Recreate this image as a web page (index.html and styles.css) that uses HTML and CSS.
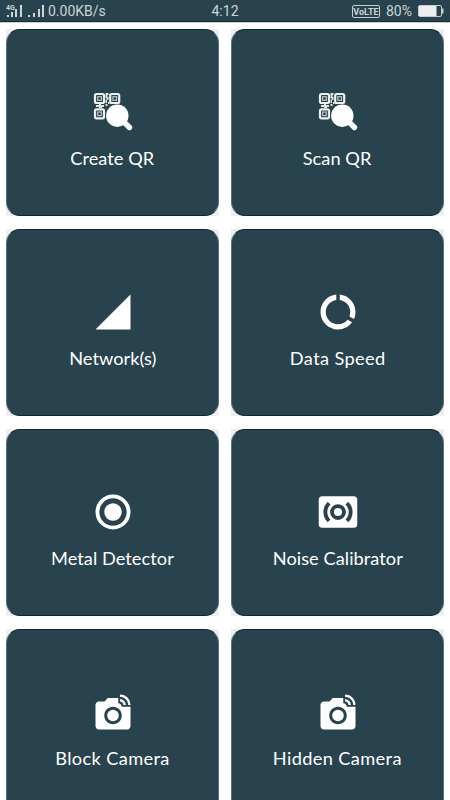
FILE: index.html
```
<!DOCTYPE html>
<html lang="en">

<head>
    <meta charset="UTF-8">
    <meta name="viewport" content="width=device-width, initial-scale=1.0">
    <title>Tools</title>
    <link rel="stylesheet" href="styles.css">
</head>

<body>
    <!-- shared icons -->
    <svg class="defs" width="0" height="0">
        <symbol id="qr" viewBox="0 0 42 42">
            <g fill="none" stroke="#eef0f0" stroke-width="2.2">
                <rect x="3" y="3" width="9" height="9" rx="1.6" />
                <rect x="18.2" y="3" width="9" height="9" rx="1.6" />
                <rect x="3" y="18.300" width="9" height="9" rx="1.6" />
            </g>
            <g fill="none" stroke="#bcc5c9" stroke-width="1.200">
                <rect x="5.700" y="5.700" width="3.600" height="3.600" />
                <rect x="20.900" y="5.700" width="3.600" height="3.600" />
                <rect x="5.700" y="21" width="3.600" height="3.600" />
            </g>
            <path fill="#e0e4e5" d="M13.500 2h3v2h-1v2h1v3h-1.500v3H13.500V9h1V7h-1zM4 14h3v-1h2v1h3v2h-2V17H7v-1H4zM13.500 13h2v2h-2zM16 11h1.500v2H16z" />
            <circle cx="25.300" cy="24.700" r="11.200" />
            <path d="M32 31l5.500 5.500" stroke="#fff" stroke-width="5.400" stroke-linecap="round" />
        </symbol>
        <symbol id="camera" viewBox="0 0 24 24">
            <circle cx="12" cy="14" r="3.300" />
            <path d="M16 3.330c2.580 0 4.670 2.090 4.670 4.670H22c0-3.310-2.690-6-6-6v1.330M16 6c1.110 0 2 .890 2 2h1.330c0-1.840-1.490-3.330-3.330-3.330V6" />
            <path d="M17 9c0-1.110-.890-2-2-2V4H9L7.170 6H4c-1.100 0-2 .900-2 2v12c0 1.100.900 2 2 2h16c1.100 0 2-.900 2-2V9h-5zm-5 10c-2.760 0-5-2.240-5-5s2.240-5 5-5 5 2.240 5 5-2.240 5-5 5z" />
        </symbol>
    </svg>

    <header class="status-bar">
        <div class="status-left">
            <svg class="signals" width="39" height="14" viewBox="0 0 39 14">
                <text class="net-type" x="0" y="6">4G</text>
                <path d="M1 11h2v2H1zM5 8h2v5H5zM9 5h2v8H9zM14 1h2v12h-2zM22 11h2v2h-2zM27 9h2v4h-2zM32 5h2v8h-2zM36 1h2v12h-2z" />
            </svg>
            <span class="rate">0.00KB/s</span>
        </div>
        <span class="clock">4:12</span>
        <div class="status-right">
            <span class="volte">VoLTE</span>
            <span class="percent">80%</span>
            <svg class="battery" width="26" height="12" viewBox="0 0 26 12">
                <rect x=".5" y=".5" width="23" height="11" rx="1.500" fill="none" stroke="#c6cdd0" />
                <rect x="1" y="1" width="17.500" height="10" fill="#eceeef" />
                <rect x="24" y="3.500" width="1.500" height="5" fill="#c6cdd0" />
            </svg>
        </div>
    </header>

    <main class="grid">
        <div class="tile">
            <div class="card">
                <svg class="icon"><use href="#qr" /></svg>
                <span class="label">Create QR</span>
            </div>
        </div>
        <div class="tile">
            <div class="card">
                <svg class="icon"><use href="#qr" /></svg>
                <span class="label">Scan QR</span>
            </div>
        </div>
        <div class="tile">
            <div class="card">
                <svg class="icon" viewBox="0 0 24 24"><path d="M2 22h20V2z" /></svg>
                <span class="label">Network(s)</span>
            </div>
        </div>
        <div class="tile">
            <div class="card">
                <svg class="icon" viewBox="0 0 24 24"><path d="M13 2.050v3.030c3.390.490 6 3.390 6 6.920 0 .900-.180 1.750-.480 2.540l2.600 1.530c.560-1.240.880-2.620.880-4.070 0-5.180-3.950-9.450-9-9.950zM12 19c-3.870 0-7-3.130-7-7 0-3.530 2.610-6.430 6-6.920V2.050c-5.060.500-9 4.760-9 9.950 0 5.520 4.470 10 9.990 10 3.310 0 6.240-1.610 8.060-4.090l-2.600-1.530C16.170 17.980 14.210 19 12 19z" /></svg>
                <span class="label wide">Data Speed</span>
            </div>
        </div>
        <div class="tile">
            <div class="card">
                <svg class="icon" viewBox="0 0 24 24">
                    <circle cx="12" cy="12" r="8.900" fill="none" stroke="#fff" stroke-width="2.200" />
                    <circle cx="12" cy="12" r="5" />
                </svg>
                <span class="label">Metal Detector</span>
            </div>
        </div>
        <div class="tile">
            <div class="card">
                <svg class="icon" viewBox="0 0 24 24">
                    <rect x="1" y="3" width="22" height="18" rx="2" />
                    <g class="cut">
                        <circle cx="12" cy="12" r="3.400" />
                        <path d="M6.900 6.900a7.200 7.200 0 0 0 0 10.200M17.100 6.900a7.200 7.200 0 0 1 0 10.200" />
                    </g>
                </svg>
                <span class="label">Noise Calibrator</span>
            </div>
        </div>
        <div class="tile">
            <div class="card">
                <svg class="icon"><use href="#camera" /></svg>
                <span class="label wide">Block Camera</span>
            </div>
        </div>
        <div class="tile">
            <div class="card">
                <svg class="icon"><use href="#camera" /></svg>
                <span class="label wide">Hidden Camera</span>
            </div>
        </div>
    </main>
</body>

</html>
```
FILE: styles.css
```
* {
    box-sizing: border-box;
}

body {
    margin: 0;
    height: 800px;
    overflow: hidden;
    background: #fff;
    font-family: "Lato", sans-serif;
    color: #fff;
}

.defs {
    display: block;
}

.status-bar {
    display: grid;
    grid-template-columns: 1fr auto 1fr;
    align-items: center;
    height: 22px;
    padding: 1px 6px 0 6px;
    background: #29434e;
    border-bottom: 1px solid #173039;
    box-shadow: 0 1px 0 #c9ced0;
    font-family: "Roboto", sans-serif;
    font-size: 14px;
    color: #cdd3d6;
}

.status-left,
.status-right {
    display: flex;
    align-items: center;
}

.status-left {
    gap: 3px;
}

.status-right {
    justify-content: flex-end;
}

.signals {
    fill: #cdd3d6;
}

.net-type {
    font-size: 7px;
    font-weight: 700;
}

.volte {
    width: 28px;
    height: 13px;
    border: 1px solid #c6cdd0;
    border-radius: 2px;
    font-size: 9px;
    font-weight: 700;
    line-height: 12px;
    text-align: center;
}

.percent {
    margin: 0 6px;
}

.grid {
    display: grid;
    grid-template-columns: 213px 213px;
    grid-auto-rows: 187px;
    gap: 13px 12px;
    padding: 7px 6px 0;
}

/* the square backing shows through at the rounded corners */
.tile {
    background: #eee;
}

.card {
    display: flex;
    flex-direction: column;
    align-items: center;
    height: 100%;
    padding-top: 61px;
    background: #29434e;
    border: 1px solid #0f2933;
    border-left-color: #56717d;
    border-right-color: #56717d;
    border-radius: 14px;
}

.icon {
    width: 42px;
    height: 42px;
    fill: #fff;
}

.cut {
    fill: none;
    stroke: #29434e;
    stroke-width: 2.2;
}

.label {
    margin-top: 16px;
    font-size: 17px;
    line-height: 20px;
    letter-spacing: .05px;
    white-space: nowrap;
    transform: scaleX(1.07);
}

.label.wide {
    letter-spacing: .35px;
}
```
